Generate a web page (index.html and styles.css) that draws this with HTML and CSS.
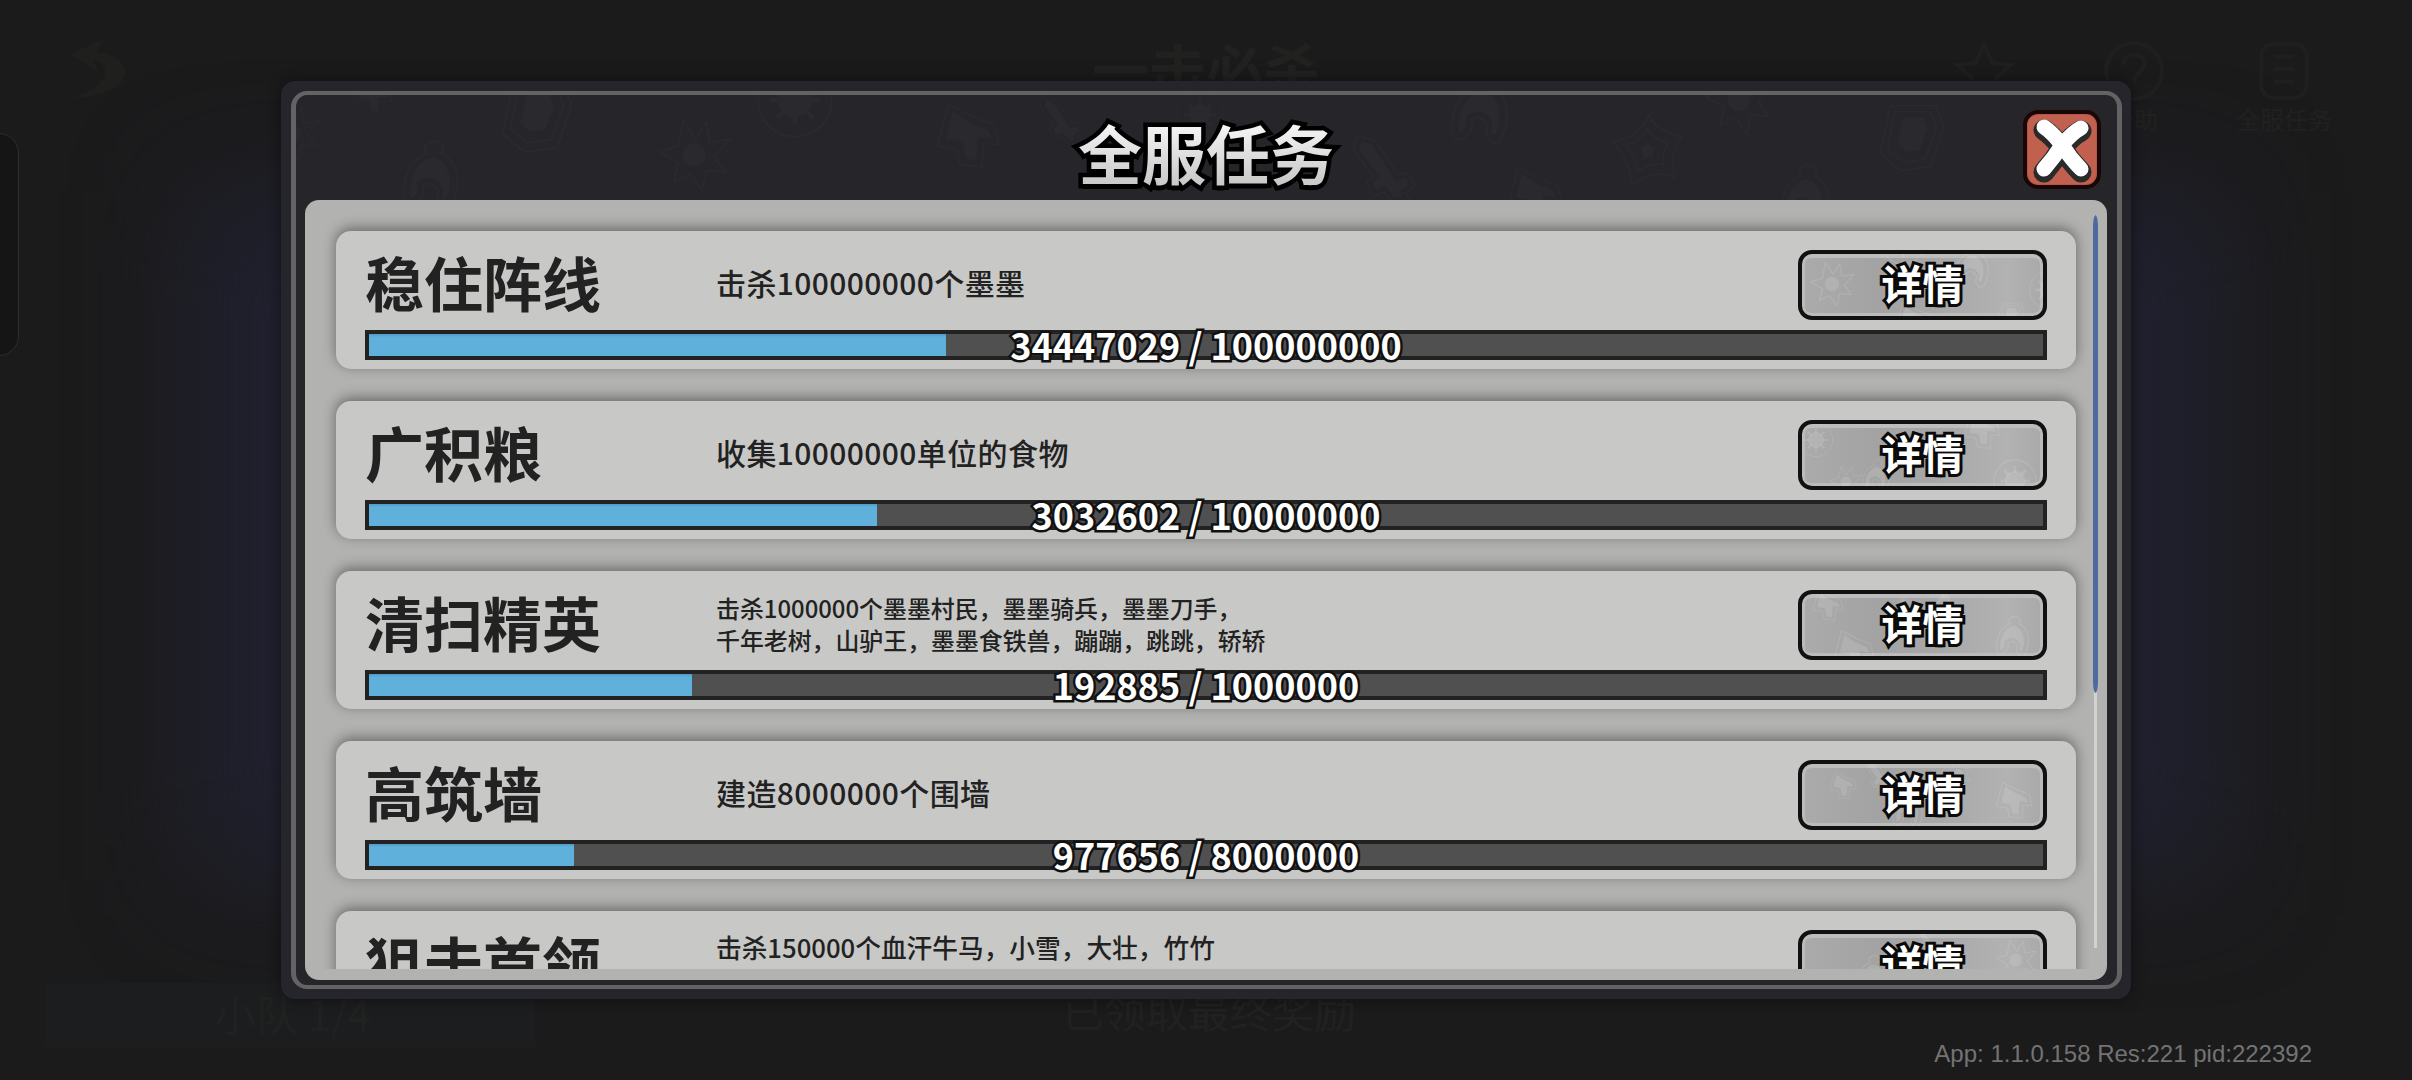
FILE: index.html
```html
<!DOCTYPE html>
<html lang="zh-CN">
<head>
<meta charset="utf-8">
<title>全服任务</title>
<link rel="stylesheet" href="styles.css">
</head>
<body>
<svg class="defs" width="0" height="0" aria-hidden="true">
  <symbol id="i-sun" viewBox="0 0 100 100"><path class="ol" d="M36 5 L52 30 L66 8 L70 34 L96 30 L76 52 L90 72 L66 70 L60 96 L46 74 L24 84 L30 60 L6 46 L30 38Z"/><circle class="fi" cx="50" cy="50" r="15"/></symbol>
  <symbol id="i-shield" viewBox="0 0 100 100"><path class="ol" d="M20 4 L84 4 L94 34 L76 88 L34 94 L6 70Z"/><path class="ol" d="M26 12 L76 12 L84 34 L68 78 L38 82 L16 64Z"/><path class="fi" d="M38 20 L66 20 L72 36 L60 66 L42 68 L28 56Z"/></symbol>
  <symbol id="i-helm" viewBox="0 0 100 100"><path class="ol" d="M45 4 C60 0 68 12 62 20 C80 28 86 50 82 70 L74 92 C62 98 52 86 58 72 C54 60 42 56 36 64 C40 76 30 88 16 90 C6 82 10 60 16 44 C22 30 34 22 42 20 C36 14 38 8 45 6Z"/><path class="fi" d="M48 24 C66 26 76 48 72 68 L68 82 C62 84 60 78 64 70 C60 52 40 46 28 60 C32 70 26 78 20 80 C16 70 20 56 24 46 C30 34 38 28 48 24Z"/></symbol>
  <symbol id="i-web" viewBox="0 0 100 100"><path class="ol" d="M52 4 C60 20 74 28 96 32 C84 46 82 62 86 86 C70 78 50 82 30 96 C28 74 20 54 4 40 C26 36 44 26 52 4Z"/><path class="ol" d="M50 22 C56 32 66 38 78 40 C72 48 70 58 72 70 C62 66 50 70 38 78 C36 66 32 54 22 44 C34 40 46 34 50 22Z"/><path class="fi" d="M50 40 C52 44 56 46 60 46 C58 50 58 54 58 60 C54 58 50 60 46 62 C46 56 44 52 40 48 C44 46 48 44 50 40Z"/></symbol>
  <symbol id="i-sword" viewBox="0 0 100 100"><path class="ol" d="M14 4 L38 10 L72 60 L84 56 L96 76 L82 86 L90 98 L62 98 L52 84 L36 90 L26 70 L36 62 L8 24Z"/><path class="fi" d="M20 12 L34 16 L68 68 L82 64 L88 74 L74 84 L78 92 L66 92 L54 76 L40 82 L34 72 L44 62 L16 24Z"/></symbol>
  <symbol id="i-gear" viewBox="0 0 100 100"><circle class="ol" cx="50" cy="50" r="46"/><circle class="fi" cx="50" cy="50" r="22"/><path class="tooth" d="M50 18V32M50 68V82M18 50H32M68 50H82M27 27L37 37M63 63L73 73M73 27L63 37M37 63L27 73"/></symbol>
  <symbol id="i-arrow" viewBox="0 0 100 100"><path class="ol" d="M22 6 L56 24 L88 36 L94 64 L72 62 L70 96 L38 92 L34 70 L6 66 Z"/><path class="fi" d="M28 16 L52 32 L80 44 L84 56 L64 52 L62 86 L46 84 L42 60 L18 56Z"/></symbol>
</svg>

<div class="backdrop">
  <div class="game-top">
    <svg class="back" viewBox="0 0 80 80"><path d="M14 22 L48 8 L42 20 Q70 24 70 42 Q64 64 16 66 Q52 54 50 38 Q48 28 38 28 L44 40Z"/></svg>
    <div class="game-title">一击必杀</div>
    <div class="game-tools">
      <div class="tool"><svg viewBox="0 0 60 60"><path d="M30 4 L38 22 L56 24 L42 36 L46 56 L30 46 L14 56 L18 36 L4 24 L22 22Z"/></svg></div>
      <div class="tool"><svg viewBox="0 0 60 60"><circle cx="30" cy="30" r="27"/><path d="M20 24 C20 10 42 12 40 24 C38 32 30 32 30 42"/></svg><span>帮助</span></div>
      <div class="tool"><svg viewBox="0 0 60 60"><rect x="8" y="4" width="44" height="52" rx="12"/><path d="M20 16H40M20 28H40M20 40H40"/></svg><span>全服任务</span></div>
    </div>
  </div>
  <div class="side-pill"></div>
  <div class="game-bottom">
    <div class="squad">小队 1/4</div>
    <div class="reward">已领取最终奖励</div>
  </div>
  <div class="version">App: 1.1.0.158 Res:221 pid:222392</div>
</div>

<main class="modal">
  <div class="ring">
    <svg class="pattern" viewBox="296 95 1821 105" aria-hidden="true">
      <use href="#i-sun" x="262" y="100" width="60" height="66"/>
      <use href="#i-arrow" x="350" y="74" width="46" height="44"/>
      <use href="#i-helm" x="396" y="134" width="74" height="84"/>
      <use href="#i-shield" x="498" y="78" width="78" height="80"/>
      <use href="#i-sun" x="655" y="115" width="78" height="80"/>
      <use href="#i-gear" x="755" y="60" width="80" height="80"/>
      <use href="#i-arrow" x="930" y="100" width="76" height="70"/>
      <use href="#i-sword" x="1030" y="94" width="62" height="50"/>
      <use href="#i-gear" x="1170" y="90" width="60" height="50"/>
      <use href="#i-sword" x="1348" y="118" width="70" height="100"/>
      <use href="#i-helm" x="1444" y="60" width="76" height="100"/>
      <use href="#i-arrow" x="1505" y="164" width="60" height="60"/>
      <use href="#i-web" x="1608" y="112" width="78" height="76"/>
      <use href="#i-sun" x="1702" y="62" width="74" height="76"/>
      <use href="#i-helm" x="1774" y="158" width="66" height="76"/>
      <use href="#i-shield" x="1876" y="98" width="72" height="82"/>
    </svg>
    <header class="modal-head">
      <h1 class="modal-title" data-label="全服任务"><span>全服任务</span></h1>
      <button class="close" aria-label="关闭">
        <svg viewBox="0 0 70 71"><path class="x-dark" d="M17 16 C26 22 30 28 35 34 C40 28 46 21 54 17 M17 58 C24 50 30 42 35 34 C40 42 46 50 54 58"/><path class="x-white" d="M17 13 C26 19 30 25 35 31 C40 25 46 18 54 14 M17 55 C24 47 30 39 35 31 C40 39 46 47 54 55"/></svg>
      </button>
    </header>
    <section class="panel">
      <div class="list">

        <article class="card">
          <div class="card-top">
            <h2 class="card-title">稳住阵线</h2>
            <p class="desc">击杀100000000个墨墨</p>
            <button class="detail">
              <svg class="btn-art" viewBox="0 0 241 62"><use href="#i-sun" x="6" y="6" width="48" height="48"/><use href="#i-gear" x="78" y="-34" width="46" height="46"/><use href="#i-helm" x="148" y="-14" width="46" height="54"/><use href="#i-arrow" x="90" y="46" width="44" height="40"/><use href="#i-shield" x="192" y="48" width="34" height="30"/><use href="#i-gear" x="226" y="16" width="40" height="40"/></svg>
              <span>详情</span>
            </button>
          </div>
          <div class="bar"><div class="fill" style="width:34.447%"></div><span class="bar-label">34447029 / 100000000</span></div>
        </article>

        <article class="card">
          <div class="card-top">
            <h2 class="card-title">广积粮</h2>
            <p class="desc">收集10000000单位的食物</p>
            <button class="detail">
              <svg class="btn-art" viewBox="0 0 241 62"><use href="#i-gear" x="-4" y="-4" width="36" height="40"/><use href="#i-helm" x="56" y="34" width="38" height="36"/><use href="#i-arrow" x="160" y="-14" width="40" height="40"/><use href="#i-gear" x="190" y="34" width="46" height="46"/><use href="#i-sun" x="26" y="40" width="36" height="36"/></svg>
              <span>详情</span>
            </button>
          </div>
          <div class="bar"><div class="fill" style="width:30.326%"></div><span class="bar-label">3032602 / 10000000</span></div>
        </article>

        <article class="card">
          <div class="card-top">
            <h2 class="card-title">清扫精英</h2>
            <p class="desc desc-sm">击杀1000000个墨墨村民，墨墨骑兵，墨墨刀手，<br>千年老树，山驴王，墨墨食铁兽，蹦蹦，跳跳，轿轿</p>
            <button class="detail">
              <svg class="btn-art" viewBox="0 0 241 62"><use href="#i-arrow" x="8" y="-6" width="36" height="34"/><use href="#i-sword" x="94" y="-6" width="26" height="40"/><use href="#i-arrow" x="30" y="34" width="44" height="44"/><use href="#i-helm" x="190" y="18" width="44" height="50"/><use href="#i-helm" x="130" y="-8" width="26" height="28"/></svg>
              <span>详情</span>
            </button>
          </div>
          <div class="bar"><div class="fill" style="width:19.2885%"></div><span class="bar-label">192885 / 1000000</span></div>
        </article>

        <article class="card">
          <div class="card-top">
            <h2 class="card-title">高筑墙</h2>
            <p class="desc">建造8000000个围墙</p>
            <button class="detail">
              <svg class="btn-art" viewBox="0 0 241 62"><use href="#i-arrow" x="26" y="6" width="30" height="30"/><use href="#i-sword" x="60" y="-10" width="34" height="40"/><use href="#i-helm" x="86" y="26" width="42" height="40"/><use href="#i-sun" x="140" y="-6" width="32" height="32"/><use href="#i-arrow" x="192" y="14" width="40" height="44"/></svg>
              <span>详情</span>
            </button>
          </div>
          <div class="bar"><div class="fill" style="width:12.2207%"></div><span class="bar-label">977656 / 8000000</span></div>
        </article>

        <article class="card">
          <div class="card-top">
            <h2 class="card-title">狙击首领</h2>
            <p class="desc desc-md">击杀150000个血汗牛马，小雪，大壮，竹竹<br>&nbsp;</p>
            <button class="detail">
              <svg class="btn-art" viewBox="0 0 241 62"><use href="#i-helm" x="50" y="20" width="44" height="44"/><use href="#i-sun" x="192" y="4" width="44" height="44"/><use href="#i-sword" x="110" y="-10" width="30" height="30"/></svg>
              <span>详情</span>
            </button>
          </div>
          <div class="bar"><div class="fill" style="width:20%"></div></div>
        </article>

      </div>
      <div class="scrollbar"><div class="scroll-thumb"></div></div>
    </section>
  </div>
</main>
</body>
</html>
```

FILE: styles.css
```css
* { box-sizing: border-box; }

html, body {
  margin: 0;
  width: 2412px;
  height: 1080px;
  overflow: hidden;
}

body {
  position: relative;
  display: flex;
  align-items: center;
  justify-content: center;
  background-color: #1b1b1c;
  font-family: "Noto Sans CJK SC", "Noto Sans", sans-serif;
  color: #222;
}

/* navy glow of the dimmed scene */
body::before {
  content: "";
  position: absolute;
  left: 190px;
  right: 190px;
  top: 190px;
  bottom: 200px;
  background: #20202f;
  filter: blur(55px);
}

.defs { position: absolute; }
.ol { fill: none; stroke: currentColor; stroke-width: 2.5; }
.fi { fill: currentColor; }
.tooth { fill: none; stroke: currentColor; stroke-width: 6; }

/* dimmed game screen behind the dialog */
.backdrop {
  position: absolute;
  inset: 0;
  display: flex;
  flex-direction: column;
  justify-content: space-between;
  color: #212120;
}

.game-top {
  display: grid;
  grid-template-columns: 1037px auto 1fr;
  padding: 32px 78px 0 55px;
  align-items: start;
}

.back { width: 80px; height: 80px; }
.back path { fill: #1f1f1d; }

.game-title {
  font-size: 57px;
  font-weight: 700;
  line-height: 70px;
  color: #212120;
}

.game-tools {
  display: flex;
  justify-content: flex-end;
  gap: 50px;
}

.tool {
  width: 100px;
  display: flex;
  flex-direction: column;
  align-items: center;
  gap: 2px;
  font-size: 24px;
  line-height: 30px;
  margin-top: 8px;
}

.tool svg { width: 62px; height: 62px; fill: none; stroke: #201f1f; stroke-width: 4; }

.side-pill {
  position: absolute;
  left: -30px;
  top: 133px;
  width: 49px;
  height: 223px;
  border: 1px solid #2a3222;
  border-radius: 20px;
  background: #151515;
}

.game-bottom {
  display: grid;
  grid-template-columns: 1206px 1fr;
  height: 100px;
  font-size: 42px;
  line-height: 60px;
}

.squad {
  margin-left: 45px;
  padding-left: 169px;
  width: 490px;
  height: 64px;
  margin-top: 3px;
  background: #1b1d1e;
}

.reward { margin-left: -144px; }

.version {
  position: absolute;
  right: 100px;
  bottom: 11px;
  font-family: "Liberation Sans", Arial, sans-serif;
  font-size: 24px;
  line-height: 30px;
  color: #737373;
}

/* dialog */
.modal {
  position: relative;
  width: 1850px;
  height: 918px;
  padding: 10px 9px 10px 10px;
  background: #25252b;
  border-radius: 14px;
  box-shadow: 0 0 14px rgba(0, 0, 0, .45);
}

.ring {
  position: relative;
  height: 100%;
  padding: 0 10px 5px 9px;
  border: solid #636363;
  border-width: 4px 5px;
  border-radius: 16px;
  background: #25252a;
  overflow: hidden;
  display: flex;
  flex-direction: column;
}

.pattern {
  position: absolute;
  left: 0;
  top: 0;
  width: 1821px;
  height: 105px;
  color: #29292e;
}

.modal-head {
  position: relative;
  flex: none;
  height: 105px;
  display: flex;
  align-items: center;
  justify-content: center;
}

.modal-title {
  position: relative;
  margin: 0;
  top: 3px;
  font-size: 64px;
  line-height: 80px;
  font-weight: 700;
}

.modal-title::before {
  content: attr(data-label);
  position: absolute;
  left: 0;
  top: 0;
  color: #000;
  -webkit-text-stroke: 9px #000;
  text-shadow: 0 5px 0 #000;
}

.modal-title span {
  position: relative;
  background: linear-gradient(#f6f6f6 20%, #c9c9c9 85%);
  -webkit-background-clip: text;
  background-clip: text;
  color: transparent;
}

.close {
  position: absolute;
  right: 6px;
  top: 15px;
  width: 78px;
  height: 79px;
  padding: 0;
  border: 4px solid #190606;
  border-radius: 15px;
  background: #c2604f;
  box-shadow: inset 0 0 0 1px #b55646;
}

.close svg { display: block; width: 70px; height: 71px; }
.x-dark, .x-white { fill: none; stroke-linecap: round; stroke-linejoin: round; }
.x-dark { stroke: #2a2a2a; stroke-width: 21; }
.x-white { stroke: #fff; stroke-width: 15; }

.panel {
  position: relative;
  flex: none;
  height: 780px;
  padding-bottom: 11px;
  border-radius: 14px;
  background: #b2b2b0;
}

.list {
  height: 769px;
  overflow: hidden;
  padding: 31px 31px 0;
  display: flex;
  flex-direction: column;
  gap: 32px;
}

.card {
  flex: none;
  width: 1740px;
  height: 138px;
  padding: 19px 29px 9px;
  border-radius: 15px;
  background: #c8c8c6;
  box-shadow: 0 -3px 13px rgba(0, 0, 0, .42);
  display: flex;
  flex-direction: column;
  gap: 10px;
}

.card-top {
  height: 70px;
  display: flex;
  align-items: center;
}

.card-title {
  flex: none;
  width: 351px;
  margin: 0 0 6px;
  font-size: 59px;
  line-height: 70px;
  font-weight: 700;
  color: #222;
  white-space: nowrap;
}

.desc {
  flex: 1;
  margin: 0 0 6px;
  font-size: 30px;
  line-height: 40px;
  letter-spacing: .4px;
  font-weight: 500;
  color: #222;
  white-space: nowrap;
}

.desc-sm { margin-bottom: 3px; font-size: 23.9px; line-height: 32px; letter-spacing: 0; }
.desc-md { margin-bottom: 3px; font-size: 25.7px; line-height: 34px; letter-spacing: 0; }

.detail {
  position: relative;
  flex: none;
  width: 249px;
  height: 70px;
  padding: 0;
  border: 4px solid #111;
  border-radius: 14px;
  background: linear-gradient(90deg, #ababab, #a3a3a3 30%, #a7a7a7 55%, #b2b2b2 85%, #a9a9a9);
  box-shadow: inset 0 4px 0 #bdbdbd, inset 0 -3px 0 #bbb, inset 3px 0 0 #bbb, inset -3px 0 0 #bbb;
  font-family: inherit;
  overflow: hidden;
}

.btn-art {
  position: absolute;
  left: 0;
  top: 0;
  width: 241px;
  height: 62px;
  color: rgba(255, 255, 255, .12);
}

.detail span {
  position: relative;
  display: block;
  font-size: 41px;
  line-height: 50px;
  padding-bottom: 6px;
  font-weight: 700;
  color: #fff;
  -webkit-text-stroke: 6px #0a0a0a;
  paint-order: stroke fill;
  text-shadow: 0 3px 0 #0a0a0a;
}

.bar {
  position: relative;
  height: 30px;
  border: 4px solid #222;
  background: #505050;
  display: flex;
  align-items: center;
  justify-content: center;
}

.fill {
  position: absolute;
  left: 0;
  top: 0;
  bottom: 0;
  background: linear-gradient(#4f9bc5, #60b0dc 14%);
}

.bar-label {
  position: relative;
  margin-bottom: 3px;
  font-size: 36px;
  line-height: 30px;
  font-weight: 700;
  color: #fff;
  white-space: nowrap;
  -webkit-text-stroke: 5px #111;
  paint-order: stroke fill;
}

.scrollbar {
  position: absolute;
  left: 1789px;
  top: 15px;
  width: 3px;
  height: 733px;
  background: #d2d2d2;
}

.scroll-thumb {
  position: absolute;
  left: -1px;
  top: 0;
  width: 5px;
  height: 478px;
  border-radius: 3px / 14px;
  background: #4e6a9c;
}
```
